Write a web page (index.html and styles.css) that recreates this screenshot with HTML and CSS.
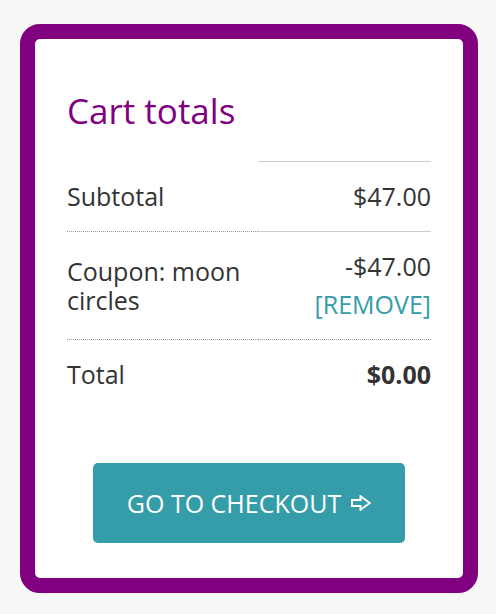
FILE: index.html
```html
<!DOCTYPE html>
<html lang="en">
<head>
    <meta charset="UTF-8">
    <meta name="viewport" content="width=device-width, initial-scale=1.0">
    <title>Cart totals</title>
    <link rel="stylesheet" href="styles.css">
</head>
<body>
    <div class="cart-totals">
        <h2>Cart totals</h2>

        <table class="totals-table">
            <tr class="subtotal-row">
                <th>Subtotal</th>
                <td>$47.00</td>
            </tr>
            <tr class="coupon-row">
                <th>Coupon: moon circles</th>
                <td>
                    -$47.00
                    <a href="#" class="remove-coupon">[REMOVE]</a>
                </td>
            </tr>
            <tr class="total-row">
                <th>Total</th>
                <td><strong>$0.00</strong></td>
            </tr>
        </table>

        <div class="checkout-wrap">
            <a href="#" class="checkout-btn">
                GO TO CHECKOUT
                <svg width="20" height="16" viewBox="0 0 20 16">
                    <path d="M1 5 H9.5 V1.2 L18.8 8 L9.5 14.8 V11 H1 Z" fill="none" stroke="#fff" stroke-width="2" stroke-linejoin="miter"/>
                </svg>
            </a>
        </div>
    </div>
</body>
</html>
```

FILE: styles.css
```css
body {
    margin: 0;
    padding: 24px 18px 20px 20px;
    background-color: #f8f8f8;
    font-family: "Open Sans", "Noto Sans", Arial, sans-serif;
    color: #333;
}
.cart-totals {
    background: white;
    border: 15px solid #800080;
    border-radius: 20px;
    padding: 51px 32px 35px;
}

h2 {
    margin: 0 0 29px;
    font-size: 35px;
    font-weight: normal;
    line-height: 1.2;
    color: #800080;
}
.totals-table {
    width: 100%;
    border-collapse: collapse;
    table-layout: fixed;
    font-size: 25px;
    line-height: 29px;
}
th, td {
    padding: 20px 0;
    font-weight: normal;
    text-align: left;
    vertical-align: middle;
}
td {
    text-align: right;
}
th {
    width: 191px;
}
.subtotal-row td {
    border-top: 1px solid #ccc;
    border-bottom: 1px solid #ccc;
}
.subtotal-row th {
    border-bottom: 1px dotted #999;
}
.coupon-row th, .coupon-row td {
    border-bottom: 1px dotted #999;
}
.remove-coupon {
    display: block;
    margin-top: 9px;
    color: #359ca9;
    text-decoration: none;
}
strong {
    font-weight: bold;
}
.checkout-wrap {
    display: flex;
    justify-content: center;
    margin-top: 54px;
}
.checkout-btn {
    display: flex;
    align-items: center;
    gap: 10px;
    height: 80px;
    box-sizing: border-box;
    padding: 0 30px;
    width: 312px;
    justify-content: center;
    background-color: #359ca9;
    color: white;
    border-radius: 5px;
    font-size: 25px;
    text-decoration: none;
}
```
